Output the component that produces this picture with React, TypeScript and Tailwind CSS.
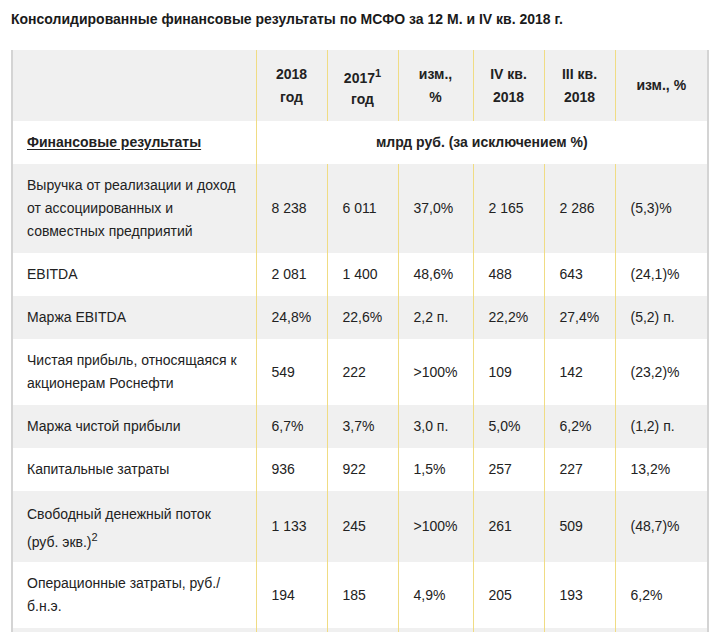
import React from "react";

type Row = { label: React.ReactNode; vals: string[]; h: string; gray: boolean };

const rows: Row[] = [
  {
    label: (
      <>
        Выручка от реализации и доход
        <br />
        от ассоциированных и
        <br />
        совместных предприятий
      </>
    ),
    vals: ["8 238", "6 011", "37,0%", "2 165", "2 286", "(5,3)%"],
    h: "h-[89px]",
    gray: true,
  },
  { label: "EBITDA", vals: ["2 081", "1 400", "48,6%", "488", "643", "(24,1)%"], h: "h-[43px]", gray: false },
  { label: "Маржа EBITDA", vals: ["24,8%", "22,6%", "2,2 п.", "22,2%", "27,4%", "(5,2) п."], h: "h-[43px]", gray: true },
  {
    label: (
      <>
        Чистая прибыль, относящаяся к
        <br />
        акционерам Роснефти
      </>
    ),
    vals: ["549", "222", ">100%", "109", "142", "(23,2)%"],
    h: "h-[66px]",
    gray: false,
  },
  { label: "Маржа чистой прибыли", vals: ["6,7%", "3,7%", "3,0 п.", "5,0%", "6,2%", "(1,2) п."], h: "h-[43px]", gray: true },
  { label: "Капитальные затраты", vals: ["936", "922", "1,5%", "257", "227", "13,2%"], h: "h-[43px]", gray: false },
  {
    label: (
      <>
        <span className="relative top-[-1px]">Свободный денежный поток</span>
        <br />
        <span className="relative top-[4px]">
          (руб. экв.)<sup className="text-[11px] align-super relative top-0 leading-none">2</sup>
        </span>
      </>
    ),
    vals: ["1 133", "245", ">100%", "261", "509", "(48,7)%"],
    h: "h-[71px]",
    gray: true,
  },
  {
    label: (
      <>
        Операционные затраты, руб./
        <br />
        б.н.э.
      </>
    ),
    vals: ["194", "185", "4,9%", "205", "193", "6,2%"],
    h: "h-[66px]",
    gray: false,
  },
];

const yb = "border-r border-r-[#f0dc84]";

export default function App() {
  return (
    <div className="min-h-[632px] bg-white px-[11px] pt-[11px] text-[14px] text-[#222] font-['Liberation_Sans',Arial,sans-serif] overflow-hidden">
      <div className="font-bold text-[14px] leading-[16px] text-[#1a1a1a]">
        Консолидированные финансовые результаты по МСФО за 12 М. и IV кв. 2018 г.
      </div>
      <table className="mt-[23px] w-[696px] table-fixed border-collapse border-l-2 border-r-2 border-[#d4d4d4] leading-[23px]">
        <colgroup>
          <col className="w-[244px]" />
          <col className="w-[71px]" />
          <col className="w-[71px]" />
          <col className="w-[75px]" />
          <col className="w-[71px]" />
          <col className="w-[71px]" />
          <col className="w-[93px]" />
        </colgroup>
        <tbody>
          <tr className="h-[71px] bg-[#f0f0f0] font-bold text-center">
            <td className={yb}></td>
            <td className={`${yb} px-[10px]`}>
              2018
              <br />
              год
            </td>
            <td className={`${yb} px-[6px]`}>
              <span className="relative top-[4px]">
                2017<sup className="text-[11px] align-super relative top-0 leading-none">1</sup>
              </span>
              <br />
              <span className="relative top-[2px]">год</span>
            </td>
            <td className={`${yb} px-[10px]`}>
              изм.,
              <br />%
            </td>
            <td className={`${yb} px-[10px]`}>
              IV кв.
              <br />
              2018
            </td>
            <td className={`${yb} px-[10px]`}>
              III кв.
              <br />
              2018
            </td>
            <td className="px-[10px]">изм., %</td>
          </tr>
          <tr className="h-[43px] bg-white font-bold">
            <td className={`${yb} pl-[14px]`}>
              <span className="underline underline-offset-[2px]">Финансовые результаты</span>
            </td>
            <td colSpan={6} className="text-center">
              млрд руб. (за исключением %)
            </td>
          </tr>
          {rows.map((r, i) => (
            <tr key={i} className={`${r.h} ${r.gray ? "bg-[#f0f0f0]" : "bg-white"}`}>
              <td className={`${yb} pl-[14px] pr-[6px] align-middle`}>{r.label}</td>
              {r.vals.map((v, j) => (
                <td key={j} className={`${j < 5 ? yb : ""} pl-[15px] pr-[2px] align-middle whitespace-nowrap`}>
                  {v}
                </td>
              ))}
            </tr>
          ))}
          <tr className="h-[43px] bg-[#f0f0f0]">
            <td className={yb}></td>
            <td className={yb}></td>
            <td className={yb}></td>
            <td className={yb}></td>
            <td className={yb}></td>
            <td className={yb}></td>
            <td></td>
          </tr>
        </tbody>
      </table>
    </div>
  );
}
